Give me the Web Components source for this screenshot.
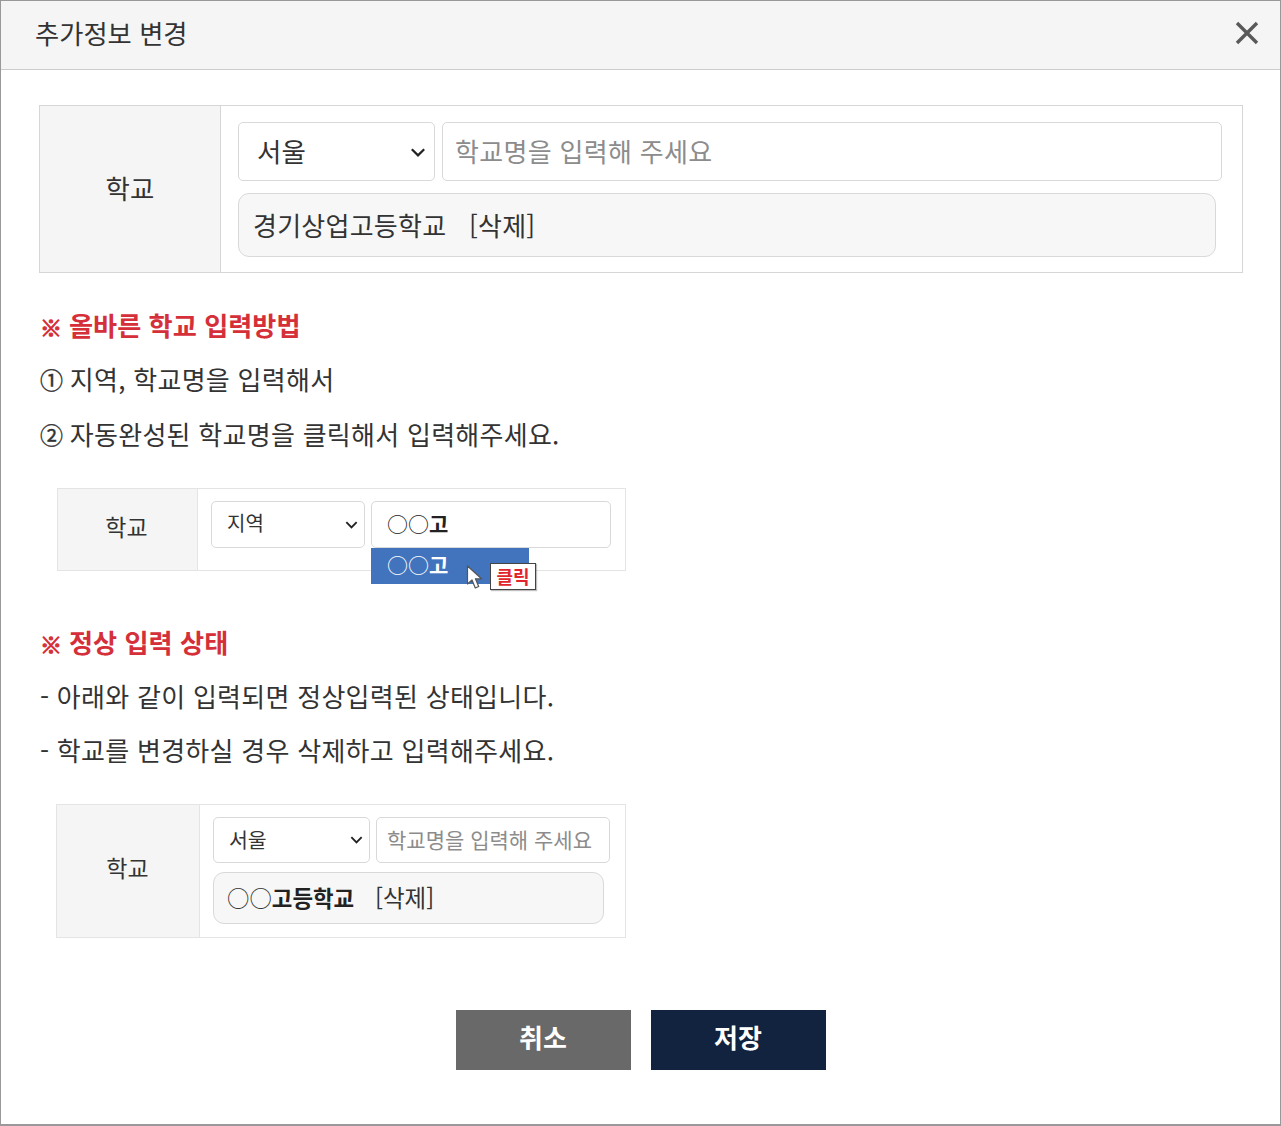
<!DOCTYPE html>
<html lang="ko">
<head>
<meta charset="utf-8">
<title>추가정보 변경</title>
<style>
  html, body { margin: 0; background: #fff; }
  body { font-family: "Noto Sans CJK KR", "Noto Sans", sans-serif; color: #333; }
  .gap-note { margin-top: 25px; }
  .gap-mini { margin: 27px 0 0 18px; }
  .gap-mini2 { margin: 26px 0 0 17px; }
  .gap-section { margin-top: 43.5px; }
  .sel-wide { width: 197px; height: 59px; --fs: 26.5px; --pl: 18px; --chev: 18px; }
  .input-wide { width: 780px; height: 59px; margin-left: 7px; --fs: 26px; --pl: 12px; letter-spacing: .3px; }
  .res-wide { width: 978px; height: 64px; margin-top: 12px; --fs: 26px; --pl: 14px; letter-spacing: .25px; }
  .sel-a { width: 154px; height: 47px; --fs: 20px; --pl: 15px; --chev: 15px; --pb: 2px; --pr: 5px; }
  .input-a { width: 240px; height: 47px; margin-left: 6px; --fs: 21px; --pl: 15px; --pb: 2px; --ink: #222; }
  .sel-b { width: 157px; height: 46px; --fs: 20.5px; --pl: 15px; --chev: 15px; --pr: 5px; }
  .input-b { width: 234px; height: 46px; margin-left: 6px; --fs: 21px; --pl: 10px; }
  .res-b { width: 391px; height: 52px; margin-top: 9px; --fs: 22.4px; --pl: 13px; }
  .res-b em { font-style: normal; font-size: 23.5px; line-height: 0; margin-left: 2px; }
  b { font-weight: 700; color: #222; }
  .num { font-size: 23px; line-height: 0; -webkit-text-stroke: .4px #333; position: relative; top: -1px; margin-right: -1px; }
</style>
</head>
<body>

<template id="edit-dialog-tpl">
  <style>
    :host { display: block; box-sizing: border-box; width: 1281px; height: 1126px; border: 1px solid #999; border-bottom-width: 2px; background: #fff; }
    header { display: flex; align-items: center; justify-content: space-between; box-sizing: border-box; height: 69px; padding: 0 20px 4px 34px; background: #f5f5f5; border-bottom: 1px solid #ccc; }
    h1 { margin: 0; font-size: 26.3px; font-weight: 400; color: #333; position: relative; top: -1px; }
    svg { display: block; }
    main { padding: 35px 37px 0 38px; }
  </style>
  <header>
    <h1></h1>
    <svg width="26" height="26" viewBox="0 0 26 26" fill="none" stroke="#595959" stroke-width="3.4"><path d="M3 3 23 23M23 3 3 23"/></svg>
  </header>
  <main><slot></slot></main>
</template>

<template id="school-row-tpl">
  <style>
    :host { display: block; box-sizing: border-box; position: relative; width: var(--w, 1204px); height: var(--h, 168px); border: 1px solid var(--line, #d6d6d6); }
    .row { display: flex; height: 100%; }
    .label { display: flex; align-items: center; justify-content: center; flex: none; box-sizing: border-box; width: var(--lw, 181px); padding: 0 var(--lp, 0) var(--lb, 4px) 0; background: #f5f5f5; border-right: 1px solid var(--line, #d6d6d6); font-size: var(--lf, 26.5px); color: #333; }
    .fields { display: flex; flex-wrap: wrap; align-content: flex-start; flex: 1; padding: var(--pad, 16px 0 0 17px); }
  </style>
  <div class="row">
    <div class="label"></div>
    <div class="fields"><slot></slot></div>
  </div>
  <slot name="over"></slot>
</template>

<template id="fake-select-tpl">
  <style>
    :host { display: flex; align-items: center; justify-content: space-between; box-sizing: border-box; border: 1px solid #d9d9d9; border-radius: 5px; background: #fff; padding: 0 var(--pr, 7px) 0 var(--pl, 16px); font-size: var(--fs, 20px); color: #333; }
    span { position: relative; top: -1px; padding-bottom: var(--pb, 0); }
    svg { display: block; width: var(--chev, 16px); height: var(--chev, 16px); }
  </style>
  <span><slot></slot></span>
  <svg viewBox="0 0 16 16" fill="none" stroke="#222" stroke-width="2"><path d="M2.5 5.5 8 11l5.5-5.5"/></svg>
</template>

<template id="fake-input-tpl">
  <style>
    :host { display: flex; align-items: center; box-sizing: border-box; border: 1px solid #d9d9d9; border-radius: 5px; background: #fff; padding: 0 0 var(--pb, 0) var(--pl, 14px); font-size: var(--fs, 20px); color: var(--ink, #8c8c8c); white-space: nowrap; }
    :host([filled]) { border-radius: 11px; background: #f7f7f7; color: #333; white-space: pre; }
    span { position: relative; top: -1px; }
  </style>
  <span><slot></slot></span>
</template>

<template id="note-block-tpl">
  <style>
    :host { display: block; font-size: 26px; line-height: 54.5px; letter-spacing: .27px; color: #333; }
    h2 { margin: 0; font-size: 26.2px; line-height: 54px; font-weight: 700; color: #d5303a; letter-spacing: 0; }
    h2 i { font-style: normal; display: inline-block; font-size: 22px; line-height: 0; width: 22px; margin-left: 1px; margin-right: 7px; -webkit-text-stroke: 1.1px #d5303a; }
    ::slotted(p) { margin: 0 0 0 1px; white-space: pre; }
  </style>
  <h2><i>※</i><span></span></h2>
  <slot></slot>
</template>

<template id="click-hint-tpl">
  <style>
    :host { display: block; position: absolute; left: 313px; top: 59px; width: 158px; height: 36px; background: #4274bd; color: #fff; font-size: 21px; }
    .item { display: flex; align-items: center; height: 32px; padding-left: 16px; }
    svg { position: absolute; left: 95px; top: 17px; }
    .tip { position: absolute; left: 119px; top: 15px; box-sizing: border-box; width: 46px; height: 27px; border: 1px solid #444; background: #fff; color: #e0262c; font-size: 18px; font-weight: 700; line-height: 25px; text-align: center; box-shadow: 1px 1px 1px rgba(0,0,0,.25); }
  </style>
  <div class="item"><slot></slot></div>
  <svg width="18" height="25" viewBox="0 0 17 25"><path d="M1 1V19L5.5 15 8.8 23 12.2 21.5 8.9 13.8H15Z" fill="#fff" stroke="#555" stroke-width="1.2" stroke-linejoin="round"/></svg>
  <div class="tip">클릭</div>
</template>

<template id="action-bar-tpl">
  <style>
    :host { display: flex; justify-content: center; gap: 20px; margin-top: 72px; padding-right: 1px; }
  </style>
  <slot></slot>
</template>

<template id="action-button-tpl">
  <style>
    :host { display: flex; align-items: center; justify-content: center; width: 175px; height: 60px; background: #696969; color: #fff; font-size: 26px; font-weight: 700; }
    :host([primary]) { background: #11233f; }
    span { position: relative; top: -3px; }
  </style>
  <span><slot></slot></span>
</template>

<edit-dialog heading="추가정보 변경">
  <school-row label="학교">
    <fake-select class="sel-wide">서울</fake-select>
    <fake-input class="input-wide">학교명을 입력해 주세요</fake-input>
    <fake-input class="res-wide" filled>경기상업고등학교   [삭제]</fake-input>
  </school-row>

  <note-block class="gap-note" heading="올바른 학교 입력방법">
    <p><span class="num">①</span> 지역, 학교명을 입력해서</p>
    <p><span class="num">②</span> 자동완성된 학교명을 클릭해서 입력해주세요.</p>
  </note-block>

  <school-row class="gap-mini" label="학교" style="--w:569px;--h:83px;--lw:140px;--lf:23px;--lp:2px;--lb:7px;--line:#e4e4e4;--pad:12px 0 0 13px">
    <fake-select class="sel-a">지역</fake-select>
    <fake-input class="input-a">○○<b>고</b></fake-input>
    <click-hint slot="over">○○<strong>고</strong></click-hint>
  </school-row>

  <note-block class="gap-section" heading="정상 입력 상태">
    <p>- 아래와 같이 입력되면 정상입력된 상태입니다.</p>
    <p>- 학교를 변경하실 경우 삭제하고 입력해주세요.</p>
  </note-block>

  <school-row class="gap-mini2" label="학교" style="--w:570px;--h:134px;--lw:143px;--lf:23px;--lp:1px;--lb:8px;--line:#e4e4e4;--pad:12px 0 0 13px">
    <fake-select class="sel-b">서울</fake-select>
    <fake-input class="input-b">학교명을 입력해 주세요</fake-input>
    <fake-input class="res-b" filled>○○<b>고등학교</b>   <em>[삭제]</em></fake-input>
  </school-row>

  <action-bar>
    <action-button>취소</action-button>
    <action-button primary>저장</action-button>
  </action-bar>
</edit-dialog>

<script>
  // every element just clones its template; a few also copy an attribute into the shadow
  function stamp(el, id) {
    const root = el.attachShadow({ mode: 'open' })
    root.appendChild(document.getElementById(id).content.cloneNode(true))
    return root
  }

  class EditDialog extends HTMLElement {
    constructor() {
      super()
      stamp(this, 'edit-dialog-tpl').querySelector('h1').textContent = this.getAttribute('heading')
    }
  }
  class SchoolRow extends HTMLElement {
    constructor() {
      super()
      stamp(this, 'school-row-tpl').querySelector('.label').textContent = this.getAttribute('label')
    }
  }
  class NoteBlock extends HTMLElement {
    constructor() {
      super()
      stamp(this, 'note-block-tpl').querySelector('h2 span').textContent = this.getAttribute('heading')
    }
  }
  class FakeSelect extends HTMLElement {
    constructor() { super(); stamp(this, 'fake-select-tpl') }
  }
  class FakeInput extends HTMLElement {
    constructor() { super(); stamp(this, 'fake-input-tpl') }
  }
  class ClickHint extends HTMLElement {
    constructor() { super(); stamp(this, 'click-hint-tpl') }
  }
  class ActionBar extends HTMLElement {
    constructor() { super(); stamp(this, 'action-bar-tpl') }
  }
  class ActionButton extends HTMLElement {
    constructor() { super(); stamp(this, 'action-button-tpl') }
  }

  customElements.define('edit-dialog', EditDialog)
  customElements.define('school-row', SchoolRow)
  customElements.define('note-block', NoteBlock)
  customElements.define('fake-select', FakeSelect)
  customElements.define('fake-input', FakeInput)
  customElements.define('click-hint', ClickHint)
  customElements.define('action-bar', ActionBar)
  customElements.define('action-button', ActionButton)
</script>
</body>
</html>
